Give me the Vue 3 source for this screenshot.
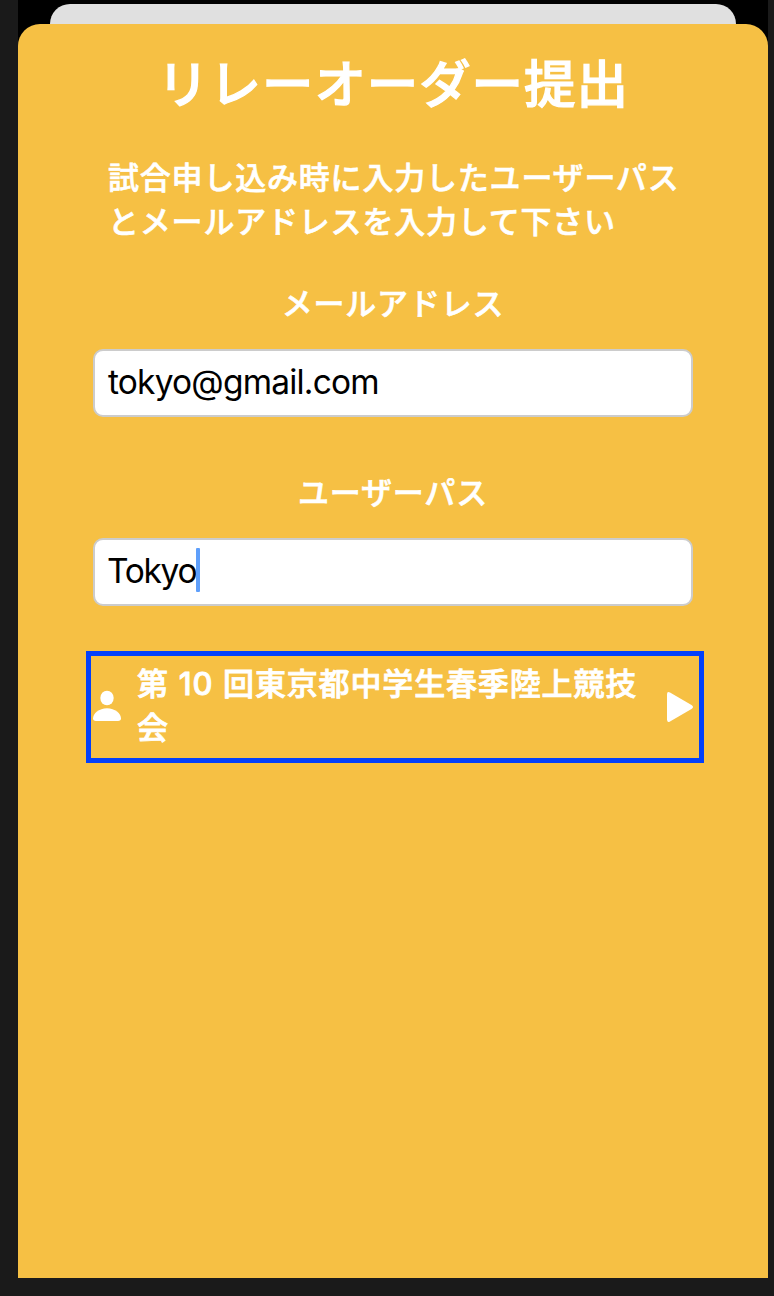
<script setup>
const tournament = '第 10 回東京都中学生春季陸上競技会'
</script>

<template>
  <div class="screen">
    <div class="behind"></div>
    <main class="sheet">
      <h1>リレーオーダー提出</h1>
      <p class="lead">試合申し込み時に入力したユーザーパスとメールアドレスを入力して下さい</p>
      <label class="mail-label">メールアドレス</label>
      <div class="field"><span class="mail">tokyo@gmail.com</span></div>
      <label class="pass-label">ユーザーパス</label>
      <div class="field"><span class="pass">Tokyo</span><i class="caret"></i></div>
      <div class="event">
        <svg class="person" width="30" height="32" viewBox="0 0 30 32"><ellipse cx="15" cy="8" rx="6.7" ry="7.3" /><path d="M4 31C2 31 1 30 1 28.500C1 23.500 7 18.200 15 18.200S29 23.500 29 28.500C29 30 28 31 26 31Z" /></svg>
        <span class="name">{{ tournament }}</span>
        <svg class="play" width="28" height="32" viewBox="0 0 28 32"><path d="M1 3.500Q1 0 4 1.600L25.500 14Q28.500 16 25.500 18L4 30.400Q1 32 1 28.500Z" /></svg>
      </div>
    </main>
  </div>
</template>

<style>
body { margin: 0; background: #1a1a1a; }
</style>
<style scoped>
.screen { position: relative; box-sizing: border-box; width: 774px; height: 1296px; padding: 24px 6px 18px 18px; background: linear-gradient(#000, #000) 18px 0 / 750px 60px no-repeat, #1a1a1a; font-family: "Inter", "Noto Sans CJK JP", sans-serif; overflow: hidden; }
.behind { position: absolute; left: 50px; top: 4px; width: 686px; height: 40px; border-radius: 20px 20px 0 0; background: #e0e0e0; }
.sheet { position: relative; box-sizing: border-box; height: 1254px; padding: 24px 75px 0; border-radius: 22px 22px 0 0; background: #f6c044; color: #fff; display: flex; flex-direction: column; }
h1 { margin: 0; height: 72px; line-height: 72px; font-size: 51.500px; letter-spacing: 0.900px; font-weight: 500; -webkit-text-stroke: 1.200px #fff; text-align: center; white-space: nowrap; }
.lead { margin: 36px 0 0; padding: 0 0 0 15px; font-size: 31px; letter-spacing: 0.800px; line-height: 44px; font-weight: 500; -webkit-text-stroke: 0.600px #fff; width: 580px; }
label { display: block; height: 44px; line-height: 44px; font-size: 31px; letter-spacing: 0.800px; font-weight: 500; -webkit-text-stroke: 0.600px #fff; text-align: center; }
.mail-label { margin-top: 38px; }
.pass-label { margin-top: 54px; }
.field { box-sizing: border-box; height: 68px; margin-top: 23px; padding: 0 13px 3px; border: 2px solid #ccc; border-radius: 10px; background: #fff; color: #000; font-size: 33.500px; display: flex; align-items: center; }
.mail { letter-spacing: -0.800px; }
.pass { letter-spacing: -1.300px; margin-left: -1px; }
.caret { width: 4px; height: 44px; margin-bottom: 2px; border-radius: 1px; background: #5e9ffb; }
.event { box-sizing: border-box; width: 618px; height: 112px; margin: 45px 0 0 -7px; border: 5px solid #0340fb; display: flex; align-items: center; }
.name { width: 512px; margin-left: 15px; font-size: 31px; letter-spacing: 0.850px; word-spacing: 0.700px; font-weight: 500; -webkit-text-stroke: 0.800px #fff; line-height: 44px; padding-bottom: 2px; }
svg { fill: #fff; flex: none; margin-bottom: 1px; }
.person { margin-left: 1px; margin-bottom: 2px; }
.play { margin-left: 17px; }
</style>
